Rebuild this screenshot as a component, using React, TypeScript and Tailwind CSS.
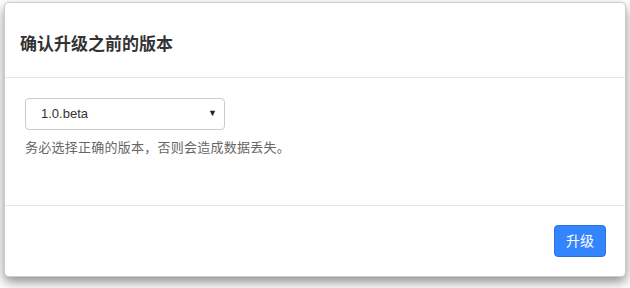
import React, { useState } from 'react';

const versions = ['1.0.beta', '1.0.0', '1.1.0'];

export default function App() {
  const [version, setVersion] = useState(versions[0]);

  return (
    <div className="w-[630px] h-[288px] bg-white pt-[2px] pl-[4px] font-['Liberation_Sans','Noto_Sans_CJK_SC',sans-serif]">
      <div className="w-[622px] h-[275px] bg-white border border-black/20 rounded-[5px] shadow-[0_5px_12px_rgba(0,0,0,0.45)] flex flex-col">
        {/* Header */}
        <div className="h-[75px] border-b border-[#e5e5e5] pl-[15px] pt-[32px]">
          <h4 className="text-[17px] leading-[20px] font-bold text-[#333]">确认升级之前的版本</h4>
        </div>

        {/* Body */}
        <div className="h-[128px] border-b border-[#e5e5e5] pl-[20px] pt-[20px]">
          <div className="relative w-[200px]">
            <select
              value={version}
              onChange={e => setVersion(e.target.value)}
              className="appearance-none w-[200px] h-[32px] border border-[#ccc] rounded-[4px] bg-white pl-[15px] text-[13px] text-[#333] outline-none"
            >
              {versions.map(v => (
                <option key={v} value={v}>{v}</option>
              ))}
            </select>
            <span className="absolute right-[8px] top-[9px] text-[9px] text-[#222] pointer-events-none">▼</span>
          </div>
          <p className="mt-[9px] text-[13px] leading-[18px] tracking-[0.25px] text-[#666]">务必选择正确的版本，否则会造成数据丢失。</p>
        </div>

        {/* Footer */}
        <div className="flex-1 flex justify-end items-start pt-[19px] pr-[19px]">
          <button className="h-[32px] px-[11px] rounded-[4px] bg-[#3385ff] border border-[#2a72e0] text-white text-[14px]">
            升级
          </button>
        </div>
      </div>
    </div>
  );
}
